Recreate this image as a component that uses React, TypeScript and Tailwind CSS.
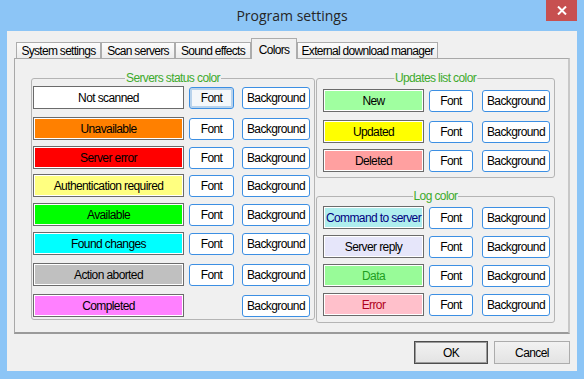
import { Fragment } from 'react';

type Row = { label: string; bg: string; text: string; mt: string; font: boolean };

const serverRows: Row[] = [
  { label: 'Not scanned', bg: 'bg-white', text: 'text-black', mt: 'mt-0', font: true },
  { label: 'Unavailable', bg: 'bg-[#ff8000]', text: 'text-black', mt: 'mt-[8px]', font: true },
  { label: 'Server error', bg: 'bg-[#ff0000]', text: 'text-black', mt: 'mt-[6px]', font: true },
  { label: 'Authentication required', bg: 'bg-[#ffff80]', text: 'text-black', mt: 'mt-[5px]', font: true },
  { label: 'Available', bg: 'bg-[#00ff00]', text: 'text-black', mt: 'mt-[6px]', font: true },
  { label: 'Found changes', bg: 'bg-[#00ffff]', text: 'text-black', mt: 'mt-[6px]', font: true },
  { label: 'Action aborted', bg: 'bg-[#c0c0c0]', text: 'text-black', mt: 'mt-[8px]', font: true },
  { label: 'Completed', bg: 'bg-[#ff80ff]', text: 'text-black', mt: 'mt-[8px]', font: false },
];

const updateRows: Row[] = [
  { label: 'New', bg: 'bg-[#a0ffa0]', text: 'text-black', mt: 'mt-0', font: true },
  { label: 'Updated', bg: 'bg-[#ffff00]', text: 'text-black', mt: 'mt-[8px]', font: true },
  { label: 'Deleted', bg: 'bg-[#ffa0a0]', text: 'text-black', mt: 'mt-[6px]', font: true },
];

const logRows: Row[] = [
  { label: 'Command to server', bg: 'bg-[#afeeee]', text: 'text-[#000080]', mt: 'mt-0', font: true },
  { label: 'Server reply', bg: 'bg-[#e6e6fa]', text: 'text-black', mt: 'mt-[6px]', font: true },
  { label: 'Data', bg: 'bg-[#98fb98]', text: 'text-[#1f9e1f]', mt: 'mt-[6px]', font: true },
  { label: 'Error', bg: 'bg-[#ffc0cb]', text: 'text-[#b00020]', mt: 'mt-[6px]', font: true },
];

const tabs = ['System settings', 'Scan servers', 'Sound effects', 'Colors', 'External download manager'];
const tabWidths = ['w-[85px]', 'w-[74px]', 'w-[76px]', 'w-[46px]', 'w-[141px]'];

function SmallButton({ children, width, focused }: { children: string; width: string; focused?: boolean }) {
  return (
    <button
      className={`${width} flex h-[22px] items-center justify-center rounded-[3px] border border-[#3c8fe3] text-[12px] tracking-[-0.6px] text-black ${
        focused ? 'bg-[#f4f7fa] shadow-[inset_0_0_0_2px_#b9d3ec]' : 'bg-white'
      }`}
    >
      {children}
    </button>
  );
}

function ColorRow({ row, labelW, fontW, gapA, gapB }: { row: Row; labelW: string; fontW: string; gapA: string; gapB: string }) {
  return (
    <div className={`flex h-[23px] items-center ${row.mt}`}>
      <div
        className={`${labelW} flex h-[23px] items-center justify-center whitespace-nowrap border border-[#6b6b6b] shadow-[inset_0_0_0_1px_#ffffff] ${row.bg} ${row.text} text-[12px] tracking-[-0.6px]`}
      >
        {row.label}
      </div>
      <div className={`${gapA} ${fontW} flex`}>
        {row.font && <SmallButton width={fontW} focused={row.label === 'Not scanned'}>Font</SmallButton>}
      </div>
      <div className={`${gapB} flex`}>
        <SmallButton width="w-[68px]">Background</SmallButton>
      </div>
    </div>
  );
}

function Group({ title, className, children }: { title: string; className: string; children: React.ReactNode }) {
  return (
    <div className={`relative rounded-[3px] border border-[#b4b4b4] ${className}`}>
      <span className="absolute left-1/2 top-[-8px] -translate-x-1/2 whitespace-nowrap bg-[#f0f0f0] px-[1px] text-[12px] leading-[14px] tracking-[-0.6px] text-[#3daa2c]">
        {title}
      </span>
      {children}
    </div>
  );
}

export default function App() {
  return (
    <div className="flex h-[379px] w-[584px] flex-col overflow-hidden bg-[#8cc5f6] font-['Liberation_Sans',Arial,sans-serif]">
      <div className="relative flex h-[31px] items-center justify-center">
        <span className="font-['Open_Sans',sans-serif] text-[14px] text-[#262626]">Program settings</span>
        <div className="absolute right-[7px] top-0 flex h-[21px] w-[31px] items-center justify-center bg-[#c75050]">
          <svg width="10" height="9" viewBox="0 0 10 9">
            <path d="M1 0.5 L9 8.5 M9 0.5 L1 8.5" stroke="#ffffff" strokeWidth="2" />
          </svg>
        </div>
      </div>

      <div className="mx-[7px] flex h-[340px] flex-col bg-[#f0f0f0] px-[7px] pt-[7px]">
        <div className="flex h-[20px] items-end pl-[2px]">
          {tabs.map((t, i) => (
            <Fragment key={t}>
              {t === 'Colors' ? (
                <div
                  className={`${tabWidths[i]} relative z-10 -mb-px flex h-[21px] items-start justify-center border border-b-0 border-[#acacac] bg-[#f0f0f0] pt-[2px] text-[12px] tracking-[-0.7px] text-black`}
                >
                  {t}
                </div>
              ) : (
                <div
                  className={`${tabWidths[i]} flex h-[16px] items-center justify-center whitespace-nowrap border border-b-0 border-[#acacac] bg-linear-to-b from-[#fcfcfc] to-[#ececec] text-[12px] tracking-[-0.7px] text-black`}
                >
                  {t}
                </div>
              )}
            </Fragment>
          ))}
        </div>

        <div className="flex h-[276px] items-start border border-b-2 border-r-2 border-[#a8a8a8] border-b-[#9a9a9a] border-r-[#c8c8c8] pl-[16px] pt-[19px]">
          <Group title="Servers status color" className="w-[284px] pb-[2px] pl-[1px] pr-[4px] pt-[7px]">
            {serverRows.map((r) => (
              <ColorRow key={r.label} row={r} labelW="w-[151px]" fontW="w-[45px]" gapA="ml-[5px]" gapB="ml-[8px]" />
            ))}
          </Group>

          <div className="ml-px flex flex-col">
            <Group title="Updates list color" className="w-[239px] pb-[5px] pl-[6px] pr-[4px] pt-[10px]">
              {updateRows.map((r) => (
                <ColorRow key={r.label} row={r} labelW="w-[101px]" fontW="w-[44px]" gapA="ml-[5px]" gapB="ml-[9px]" />
              ))}
            </Group>
            <Group title="Log color" className="mt-[18px] w-[239px] pb-[6px] pl-[6px] pr-[4px] pt-[9px]">
              {logRows.map((r) => (
                <ColorRow key={r.label} row={r} labelW="w-[101px]" fontW="w-[44px]" gapA="ml-[5px]" gapB="ml-[9px]" />
              ))}
            </Group>
          </div>
        </div>

        <div className="mt-[7px] flex justify-end gap-[6px]">
          <button className="h-[23px] w-[74px] border border-[#4d4d4d] bg-linear-to-b from-[#f2f2f2] to-[#e3e3e3] text-[12px] tracking-[-0.6px] text-black shadow-[inset_0_0_0_1px_#9a9a9a]">
            OK
          </button>
          <button className="h-[23px] w-[76px] border border-[#acacac] bg-linear-to-b from-[#f2f2f2] to-[#e3e3e3] text-[12px] tracking-[-0.6px] text-black">
            Cancel
          </button>
        </div>
      </div>
    </div>
  );
}
